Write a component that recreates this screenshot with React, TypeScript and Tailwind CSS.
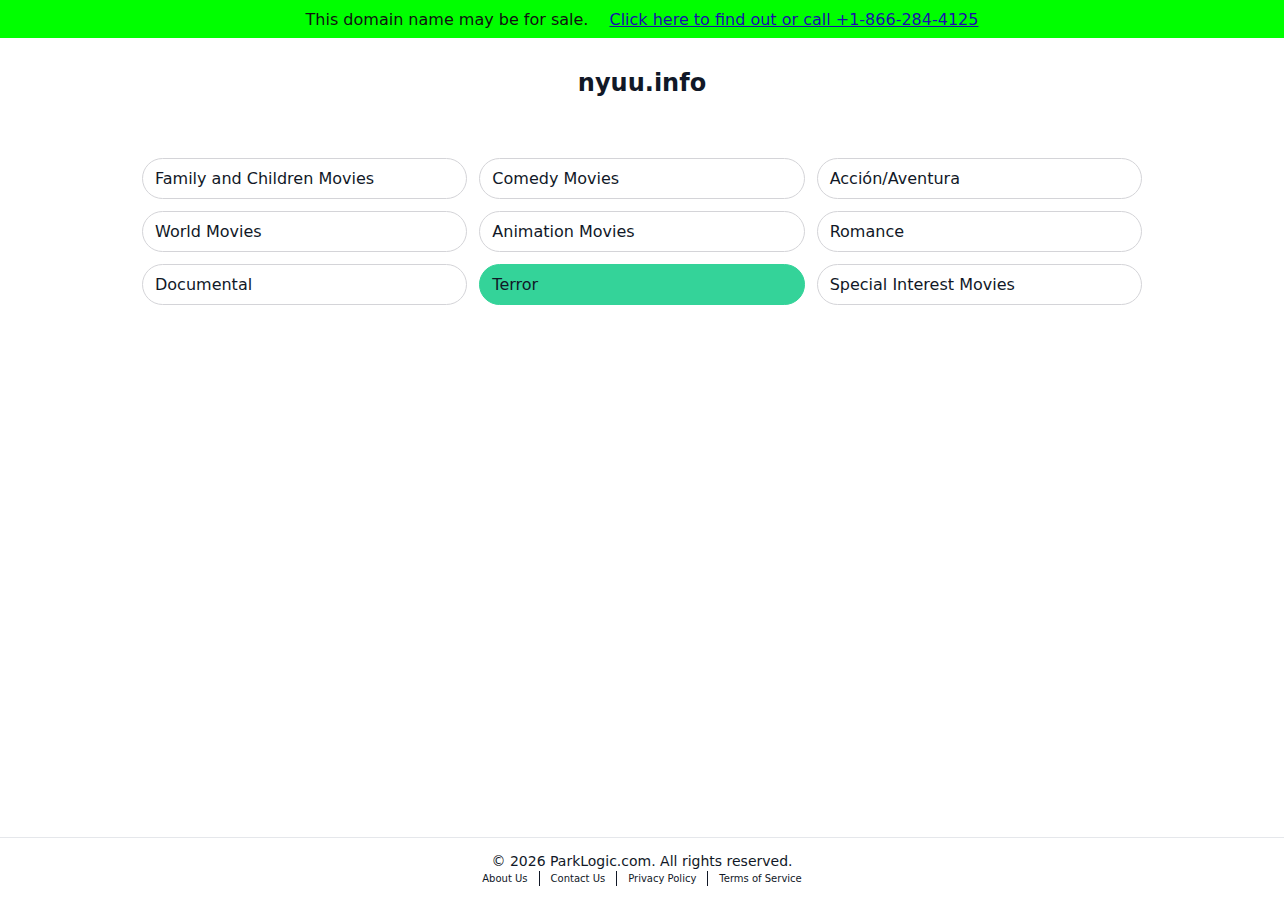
import React from "react";

const categories = [
  "Family and Children Movies",
  "Comedy Movies",
  "Acción/Aventura",
  "World Movies",
  "Animation Movies",
  "Romance",
  "Documental",
  "Terror",
  "Special Interest Movies",
];

const footerLinks = ["About Us", "Contact Us", "Privacy Policy", "Terms of Service"];

const App: React.FC = () => {
  return (
    <div className="min-h-screen flex flex-col bg-white text-gray-900 font-['DejaVu_Sans',sans-serif]">
      {/* Barra de venta del dominio */}
      <div className="h-[38px] pt-[1px] bg-[#00ff00] flex items-center justify-center text-[16px] text-[#111111]">
        <span>This domain name may be for sale.</span>
        <a href="#" className="ml-[21px] text-[#1a0dab] underline">
          Click here to find out or call +1-866-284-4125
        </a>
      </div>

      <main className="flex-1">
        <h1 className="text-center text-[24px] leading-[32px] font-bold mt-[29px] text-[#111827]">nyuu.info</h1>

        {/* Categorías */}
        <div className="w-[1000px] mx-auto mt-[59px] grid grid-cols-3 gap-x-[12px] gap-y-[12px]">
          {categories.map((c) => (
            <a
              key={c}
              href="#"
              className={`h-[41px] rounded-full flex items-center px-[12px] text-[16px] text-[#111827] ${
                c === "Terror" ? "bg-[#34d399] border border-[#34d399]" : "bg-white border border-[#d4d4d8]"
              }`}
            >
              {c}
            </a>
          ))}
        </div>
      </main>

      {/* Pie de página */}
      <footer className="border-t border-[#e5e7eb] pt-[14px] pb-[13px] flex flex-col items-center text-[#111827]">
        <p className="text-[14px] leading-[18px]">© 2026 ParkLogic.com. All rights reserved.</p>
        <div className="flex items-center text-[10px] leading-[16px] mt-[1px]">
          {footerLinks.map((l, i) => (
            <React.Fragment key={l}>
              {i > 0 && <span className="mx-[11px] h-[15px] -mt-[2px] border-l border-[#111827]" />}
              <a href="#">{l}</a>
            </React.Fragment>
          ))}
        </div>
      </footer>
    </div>
  );
};

export default App;
